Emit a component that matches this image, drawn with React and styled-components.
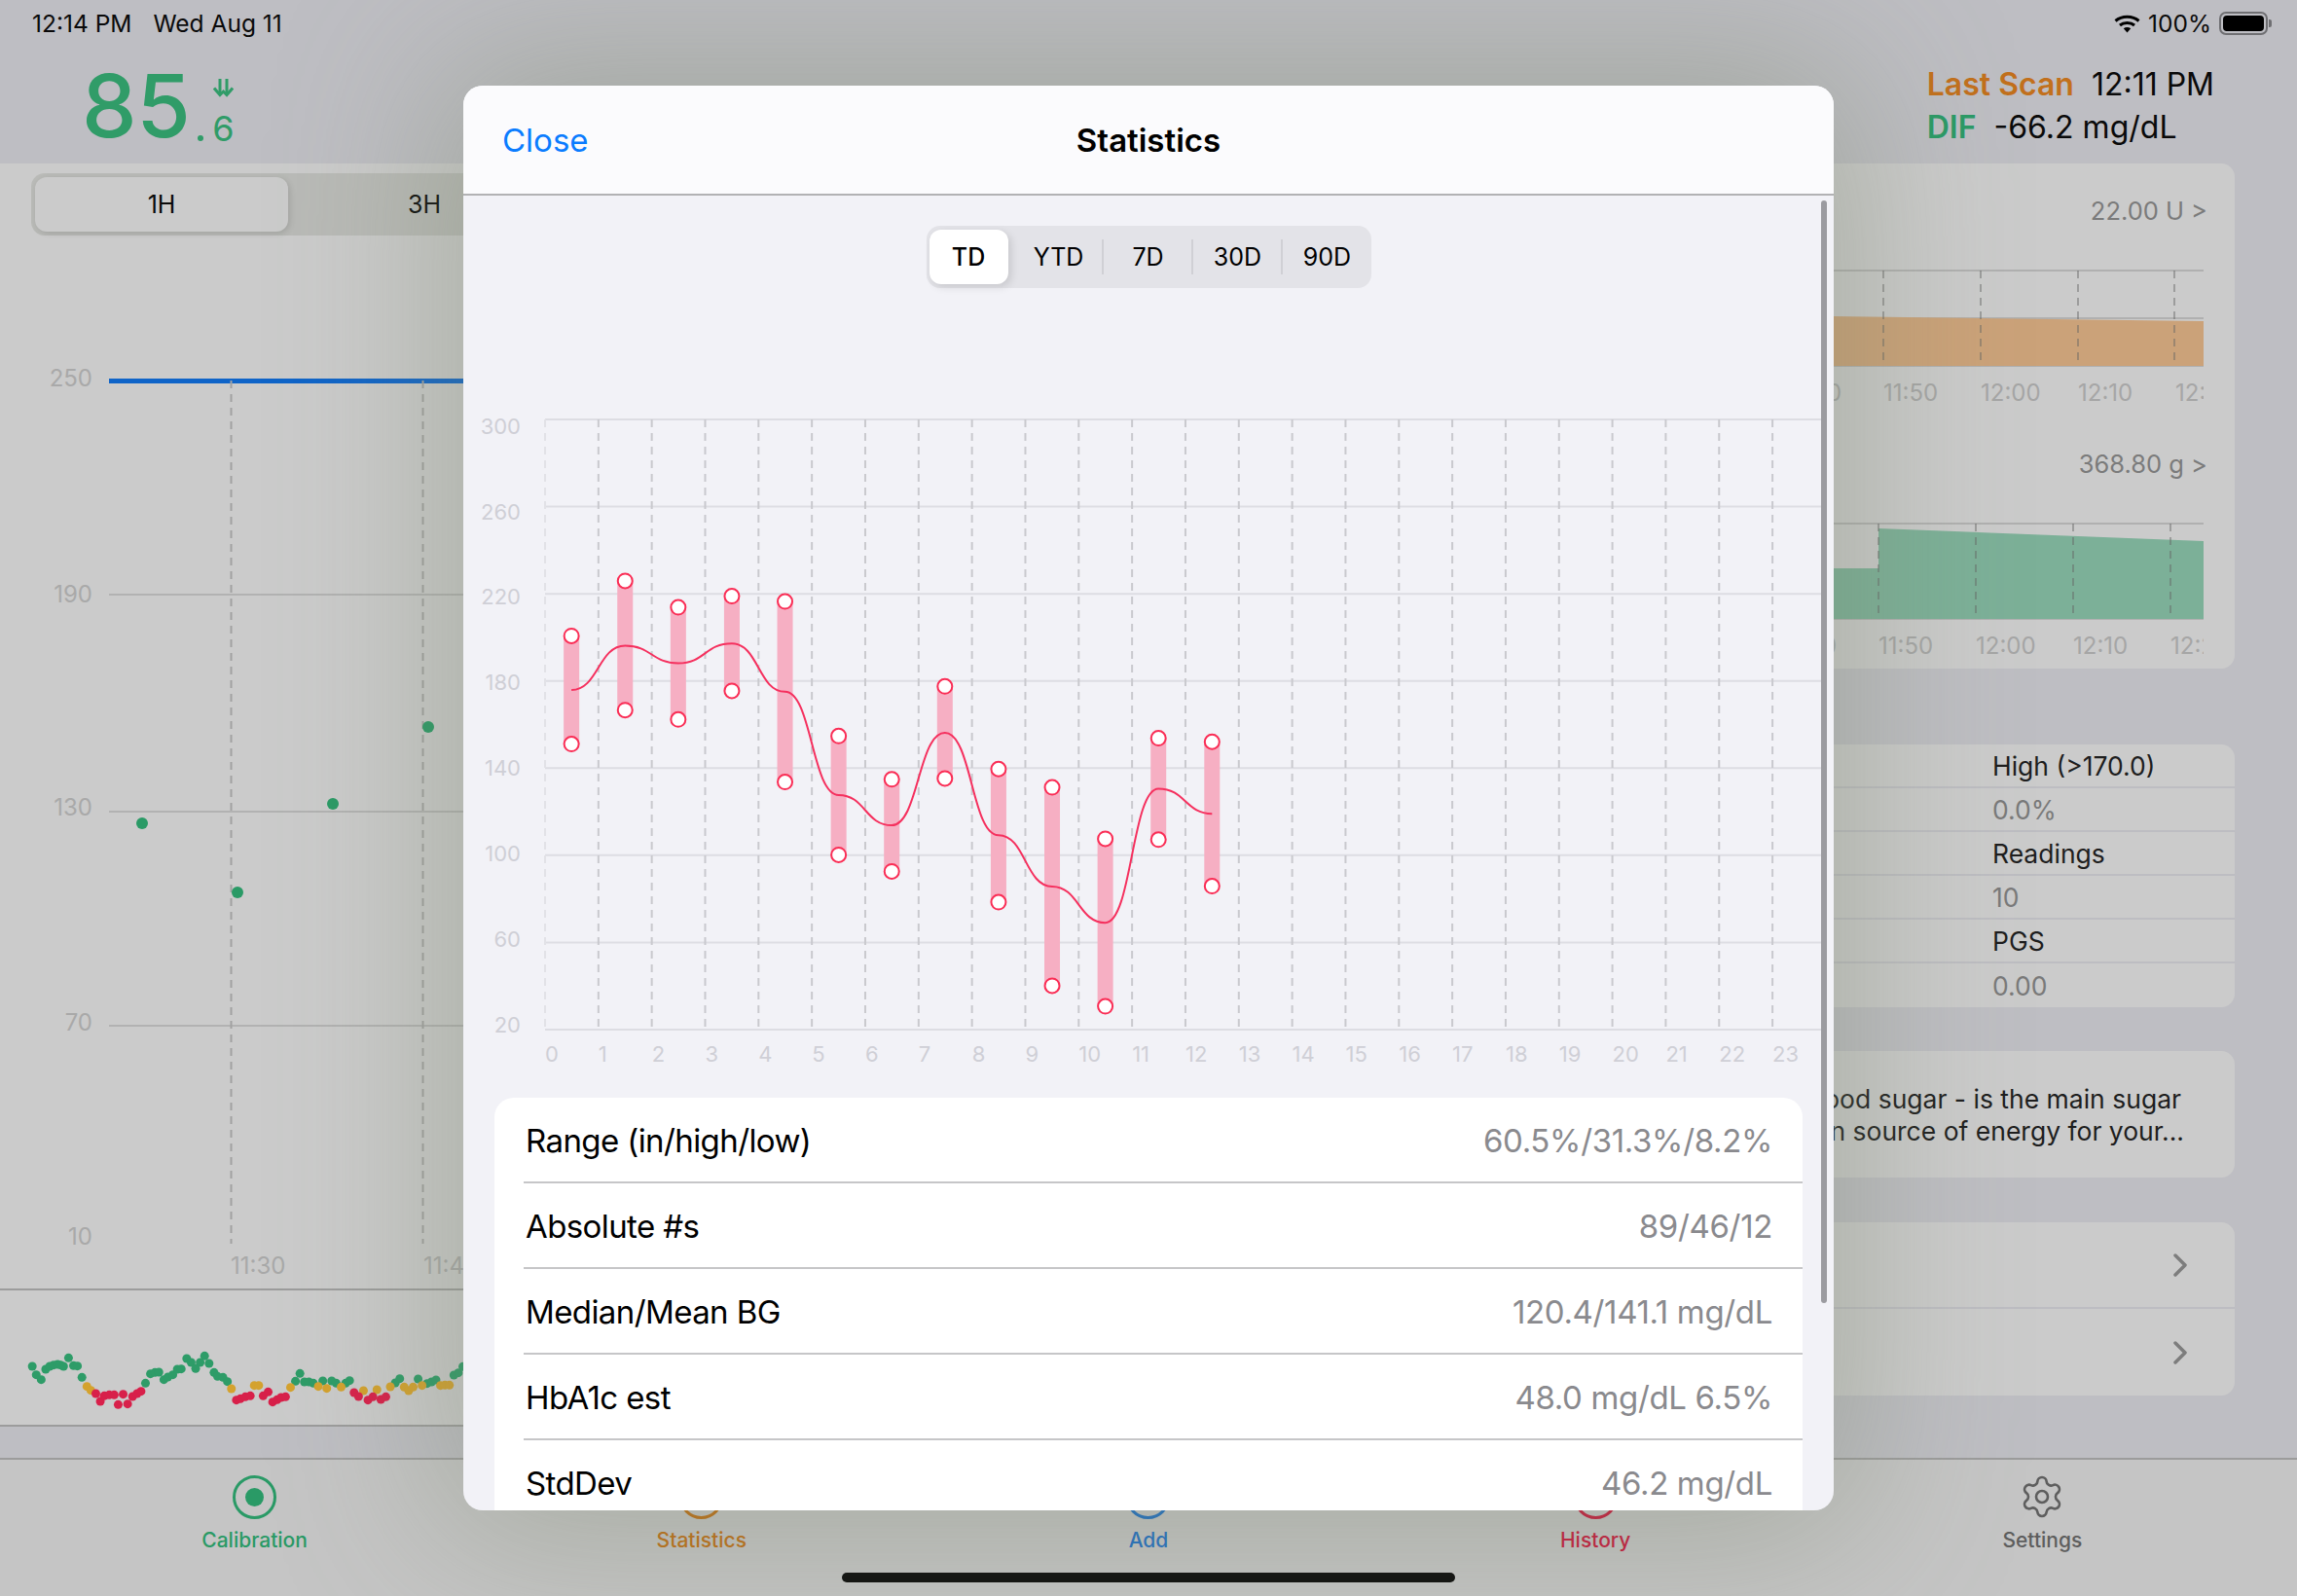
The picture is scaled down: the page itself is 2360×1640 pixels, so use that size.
import React from 'react'
import styled, { createGlobalStyle } from 'styled-components'
import { Settings } from 'lucide-react'

const GlobalStyle = createGlobalStyle`
  html, body { margin: 0; padding: 0; background: #bebec3; }
  * { box-sizing: border-box; }
`

const Page = styled.div`
  position: relative;
  width: 2360px;
  height: 1640px;
  overflow: hidden;
  display: flex;
  flex-direction: column;
  background: #bebec3;
  color: #0a0a0a;
  font-family: Inter, "Liberation Sans", sans-serif;
`
const StatusBar = styled.div`
  height: 48px;
  padding: 0 30px 0 33px;
  display: flex;
  align-items: center;
  font-size: 24.5px;
  gap: 22px;
`
const StatusRight = styled.div`
  margin-left: auto;
  display: flex;
  align-items: center;
  gap: 8px;
`
const Battery = styled.div`
  width: 50px;
  height: 24px;
  border: 2px solid #6f6f72;
  border-radius: 7px;
  padding: 2px;
  position: relative;
  &::before {
    content: '';
    display: block;
    height: 100%;
    background: #000;
    border-radius: 4px;
  }
  &::after {
    content: '';
    position: absolute;
    right: -6px;
    top: 6px;
    width: 3px;
    height: 8px;
    background: #6f6f72;
    border-radius: 0 2px 2px 0;
  }
`
const TopRow = styled.div`
  height: 120px;
  padding: 0 85px 0 84px;
  display: flex;
  justify-content: space-between;
`
const Reading = styled.div`
  display: flex;
  align-items: flex-end;
  height: 99px;
  color: #309c68;
`
const BigValue = styled.span`
  font-size: 90px;
  line-height: 76px;
  font-weight: 500;
  letter-spacing: -0.5px;
`
const Dot = styled.span`
  width: 6px;
  height: 6px;
  border-radius: 50%;
  background: #309c68;
  margin: 0 9px 2px 8px;
`
const Trend = styled.div`
  display: flex;
  flex-direction: column;
  align-items: center;
  gap: 17px;
`
const SmallValue = styled.span`
  font-size: 36px;
  line-height: 30px;
`
const ScanInfo = styled.div`
  display: flex;
  flex-direction: column;
  gap: 10px;
  padding-top: 22px;
  font-size: 32px;
  line-height: 34px;
`
const ScanRow = styled.div`
  display: flex;
  gap: 18px;
`
const ScanLabel = styled.span`
  font-weight: 600;
  color: ${(p) => p.$color};
`
const Body = styled.div`
  height: 1332px;
  display: flex;
  border-bottom: 2px solid #9c9c9c;
`
const LeftColumn = styled.div`
  width: 1180px;
  flex: none;
  display: flex;
  flex-direction: column;
`
const GraphPanel = styled.div`
  height: 1158px;
  background: #cbcbcb;
  padding-top: 10px;
  border-bottom: 2px solid #9c9c9c;
  display: flex;
  flex-direction: column;
`
const RangeTabs = styled.div`
  margin-left: 32px;
  height: 64px;
  flex: none;
  padding: 4px;
  display: flex;
  background: #b9bab7;
  border-radius: 14px 0 0 14px;
`
const RangeTab = styled.div`
  width: ${(p) => (p.$active ? 260 : 280)}px;
  display: flex;
  align-items: center;
  justify-content: center;
  font-size: 25px;
  border-radius: 12px;
  background: ${(p) => (p.$active ? '#cbcbcb' : 'transparent')};
  box-shadow: ${(p) => (p.$active ? '2px 2px 6px rgba(0,0,0,.12)' : 'none')};
`
const Strip = styled.div`
  height: 140px;
  background: #cbcbcb;
  border-bottom: 2px solid #9c9c9c;
`
const RightColumn = styled.div`
  flex: 1;
  padding-right: 64px;
  display: flex;
  flex-direction: column;
`
const Card = styled.div`
  margin-top: ${(p) => p.$top || 0}px;
  background: #cbcbcb;
  border-radius: 14px;
  overflow: hidden;
`
const ChartCard = styled(Card)`
  height: 519px;
  display: flex;
  flex-direction: column;
`
const ChartValue = styled.div`
  height: 34px;
  margin-top: ${(p) => p.$top}px;
  padding-right: 28px;
  text-align: right;
  font-size: 25.5px;
  line-height: 34px;
  color: #7b7b7b;
`
const ChartSvg = styled.svg`
  display: block;
  flex: none;
  margin-top: ${(p) => p.$top || 0}px;
`
const InfoRow = styled.div`
  height: 45px;
  padding-left: 867px;
  display: flex;
  align-items: center;
  font-size: 26.5px;
  color: ${(p) => (p.$muted ? '#7a7a7a' : '#1e1e1e')};
  border-bottom: ${(p) => (p.$last ? 'none' : '2px solid #bdbdc2')};
`
const NoteCard = styled(Card)`
  height: 130px;
  padding: 1px 55px 0 0;
  display: flex;
  flex-direction: column;
  justify-content: center;
  align-items: flex-end;
  gap: 2px;
  font-size: 26.5px;
  line-height: 31px;
  color: #1e1e1e;
`
const NoteLine = styled.span`
  margin-right: ${(p) => (p.$long ? -3 : 0)}px;
`
const LinkRow = styled.div`
  height: 89px;
  padding-right: 49px;
  display: flex;
  align-items: center;
  justify-content: flex-end;
  border-bottom: ${(p) => (p.$last ? 'none' : '2px solid #bdbdc2')};
`
const TabBar = styled.div`
  flex: 1;
  padding: 16px 32px 0;
  display: grid;
  grid-template-columns: repeat(5, 1fr);
  background: #c5c5c5;
`
const TabItem = styled.div`
  display: flex;
  flex-direction: column;
  align-items: center;
  gap: 10px;
  font-size: 21px;
  line-height: 24px;
  font-weight: 500;
  color: ${(p) => p.$color};
`
const RingIcon = styled.div`
  width: 45px;
  height: 45px;
  border-radius: 50%;
  border: 3px solid ${(p) => p.$color};
  display: flex;
  align-items: center;
  justify-content: center;
  &::after {
    content: '';
    display: ${(p) => (p.$filled ? 'block' : 'none')};
    width: 19px;
    height: 19px;
    border-radius: 50%;
    background: ${(p) => p.$color};
  }
`
const HomeBar = styled.div`
  position: absolute;
  left: 865px;
  bottom: 14px;
  width: 630px;
  height: 10px;
  border-radius: 5px;
  background: #0a0a0a;
`
const Modal = styled.div`
  position: absolute;
  left: 476px;
  top: 88px;
  width: 1408px;
  height: 1464px;
  border-radius: 20px;
  overflow: hidden;
  background: #f2f2f7;
  display: flex;
  flex-direction: column;
`
const ModalGlow = styled.div`
  position: absolute;
  left: 476px;
  top: 88px;
  width: 1408px;
  height: 1464px;
  border-radius: 20px;
  box-shadow: 0 0 170px 20px rgba(120, 130, 105, 0.42);
`
const ModalHeader = styled.div`
  height: 113px;
  flex: none;
  position: relative;
  display: flex;
  align-items: center;
  justify-content: center;
  background: #fbfbfd;
  border-bottom: 2px solid #b2b2b4;
  font-size: 33px;
  font-weight: 600;
  color: #000;
`
const CloseLink = styled.span`
  position: absolute;
  left: 40px;
  font-weight: 400;
  color: #0a7cff;
`
const Segments = styled.div`
  align-self: center;
  flex: none;
  margin-top: 31px;
  width: 457px;
  height: 64px;
  padding: 4px 3px;
  display: flex;
  background: #e3e3e8;
  border-radius: 14px;
`
const Segment = styled.div`
  flex: none;
  width: ${(p) => (p.$active ? 81 : 92)}px;
  margin-right: ${(p) => (p.$active ? 6 : 0)}px;
  display: flex;
  align-items: center;
  justify-content: center;
  font-size: 25px;
  font-weight: ${(p) => (p.$active ? 500 : 400)};
  color: #000;
  border-radius: 12px;
  background: ${(p) => (p.$active ? '#fff' : 'transparent')};
  box-shadow: ${(p) => (p.$active ? '3px 3px 8px rgba(0,0,0,.12)' : 'none')};
  position: relative;
  &::after {
    content: '';
    display: ${(p) => (p.$divider ? 'block' : 'none')};
    position: absolute;
    right: 0;
    top: 10px;
    bottom: 10px;
    width: 2px;
    background: #d0d0d5;
  }
`
const StatCard = styled.div`
  margin: 0 32px;
  background: #fff;
  border-radius: 20px 20px 0 0;
  flex: none;
`
const StatRow = styled.div`
  height: 88px;
  margin-left: 30px;
  padding: 2px 31px 0 2px;
  display: flex;
  align-items: center;
  justify-content: space-between;
  font-size: 33px;
  letter-spacing: -0.6px;
  color: #000;
  border-bottom: 2px solid #c6c6c8;
`
const StatValue = styled.span`
  color: #8a8a8e;
  letter-spacing: -0.35px;
`
const ScrollThumb = styled.div`
  position: absolute;
  right: 7px;
  top: 118px;
  width: 6px;
  height: 1133px;
  border-radius: 3px;
  background: #9b9ba0;
`

const CANDLES = [
  [210, 552, 794, 673], [318, 429, 718, 574], [425, 488, 739, 613], [533, 463, 675, 569],
  [640, 475, 879, 677], [748, 776, 1042, 908], [855, 873, 1079, 976], [962, 665, 871, 769],
  [1070, 850, 1148, 998], [1178, 891, 1335, 1113], [1285, 1006, 1381, 1194], [1392, 781, 1008, 894],
  [1500, 789, 1112, 950],
]
const px = (x) => 480 + x / 1.96
const py = (y) => 400 + y / 2.178

const trendPath = () => {
  let d = ''
  CANDLES.forEach((c, i) => {
    const x = px(c[0])
    const y = py(c[3])
    if (i === 0) {
      d = `M${x} ${y}`
    } else {
      const prev = CANDLES[i - 1]
      const x0 = px(prev[0])
      const y0 = py(prev[3])
      const mid = (x0 + x) / 2
      d += ` C${mid} ${y0} ${mid} ${y} ${x} ${y}`
    }
  })
  return d
}

const Y_LABELS = ['300', '260', '220', '180', '140', '100', '60', '20']

const StatsChart = () => (
  <ChartSvg width="1408" height="832" viewBox="476 296 1408 832" fontFamily="Inter, sans-serif" fontSize="22" fill="#cfcfd6">
    {Y_LABELS.map((l, i) => (
      <g key={l}>
        <line x1="560" x2="1877" y1={431 + i * 89.57} y2={431 + i * 89.57} stroke="#dddde3" strokeWidth="2" />
        <text x="535" y={445.6 + i * 87.9} textAnchor="end">{l}</text>
      </g>
    ))}
    {Array.from({ length: 25 }).map((_, i) => (
      <line key={i} x1={560 + i * 54.83} x2={560 + i * 54.83} y1="431" y2="1058" stroke={i === 0 ? '#e2e2e7' : '#c9c9ce'} strokeWidth="2" strokeDasharray="8 6" />
    ))}
    {Array.from({ length: 24 }).map((_, i) => (
      <text key={i} x={560 + i * 54.83} y="1091">{i}</text>
    ))}
    {CANDLES.map((c) => (
      <rect key={c[0]} x={px(c[0]) - 8} y={py(c[1])} width="16" height={py(c[2]) - py(c[1])} fill="#f6afc3" />
    ))}
    <path d={trendPath()} fill="none" stroke="#f5305e" strokeWidth="2" />
    {CANDLES.map((c) => (
      <g key={c[0]} fill="#fff" stroke="#fa2d55" strokeWidth="2">
        <circle cx={px(c[0])} cy={py(c[1])} r="7.5" />
        <circle cx={px(c[0])} cy={py(c[2])} r="7.5" />
      </g>
    ))}
  </ChartSvg>
)

const GRID_Y = [391, 611, 834, 1054]
const GLUCOSE_LABELS = [[250, 397], [190, 619], [130, 838], [70, 1059], [10, 1279]]

const MainGraph = () => (
  <ChartSvg width="1180" height="1082" viewBox="0 242 1180 1082" fontFamily="Inter, sans-serif" fontSize="24" fill="#a9a9a9">
    {GRID_Y.map((y) => (
      <line key={y} x1="112" x2="1180" y1={y} y2={y} stroke="#b2b2b2" strokeWidth="2" />
    ))}
    <rect x="112" y="389" width="1068" height="5" fill="#0f64c8" />
    {GLUCOSE_LABELS.map(([l, y]) => (
      <text key={l} x="95" y={y} textAnchor="end">{l}</text>
    ))}
    {[237.5, 434.5].map((x) => (
      <line key={x} x1={x} x2={x} y1="391" y2="1278" stroke="#a2a2a2" strokeWidth="2" strokeDasharray="8 6" />
    ))}
    <text x="237" y="1309">11:30</text>
    <text x="435" y="1309">11:40</text>
    {[[146, 846], [244, 917], [342, 826], [440, 747]].map(([x, y]) => (
      <circle key={x} cx={x} cy={y} r="6" fill="#2a9a66" />
    ))}
  </ChartSvg>
)

const G = '#2e9c68'
const Y = '#d4a22e'
const R = '#d8204a'
const STRIP_DOTS = [
  [G, [[65,372],[73,398],[83,413],[92,381],[100,372],[108,368],[116,366],[122,368],[128,372],[138,346],[148,370],[156,371],[165,406],[293,424],[303,395],[312,391],[320,390],[330,413],[338,405],[348,398],[357,381],[365,380],[376,348],[385,360],[394,379],[403,360],[412,340],[421,363],[431,391],[438,403],[449,406],[458,419],[595,418],[604,394],[613,420],[622,420],[631,424],[650,417],[668,417],[677,424],[696,424],[704,416],[796,423],[805,410],[842,411],[860,425],[869,420],[878,414],[914,399],[923,392],[932,373]]],
  [Y, [[175,434],[183,446],[466,441],[512,431],[521,431],[585,437],[641,434],[658,440],[687,436],[732,447],[759,444],[786,435],[814,436],[823,447],[832,436],[850,431],[887,431],[896,430],[905,430]]],
  [R, [[193,456],[202,480],[210,463],[220,460],[230,460],[238,490],[248,458],[257,488],[267,465],[276,456],[284,449],[476,476],[484,472],[494,466],[504,463],[530,463],[540,451],[549,482],[558,475],[566,468],[575,466],[713,453],[722,465],[741,476],[751,466],[767,474],[777,466]]],
]

const ScatterStrip = () => (
  <ChartSvg width="480" height="138" viewBox="0 1326 480 138">
    {STRIP_DOTS.map(([color, points]) =>
      points.map(([x, y]) => <circle key={`${x}-${y}`} cx={x / 1.96} cy={1280 + y / 3} r="4.5" fill={color} />)
    )}
  </ChartSvg>
)

const DoseChart = ({ top, viewY, gridX, area, fill, marginTop }) => (
  <ChartSvg width="1084" height="139" viewBox={`1180 ${viewY} 1084 139`} fontFamily="Inter, sans-serif" fontSize="24" fill="#a6a6a6" $top={marginTop}>
    <line x1="1180" x2="2264" y1={top} y2={top} stroke="#b0b0b0" strokeWidth="2" />
    <line x1="1180" x2="2264" y1={top + 49} y2={top + 49} stroke="#b0b0b0" strokeWidth="2" />
    <line x1="1180" x2="2264" y1={top + 98} y2={top + 98} stroke="#b0b0b0" strokeWidth="2" />
    <polygon points={area} fill={fill} />
    {gridX.map((x) => (
      <line key={x} x1={x} x2={x} y1={top} y2={top + 98} stroke="rgba(100,100,100,.45)" strokeWidth="2" strokeDasharray="8 6" />
    ))}
    {['11:40', '11:50', '12:00', '12:10', '12:20'].map((t, i) => (
      <text key={t} x={gridX[0] - 100 + i * 100} y={top + 134}>{t}</text>
    ))}
  </ChartSvg>
)

const WifiIcon = () => (
  <svg width="27" height="19" viewBox="0 0 27 19" fill="none" stroke="#000" strokeWidth="3">
    <path d="M1.5 6.5C8 .8 19 .8 25.500 6.500" />
    <path d="M6 11C10 7.600 17 7.600 21 11" />
    <path d="M13.500 18.500L9.800 14.300C12 12.600 15 12.600 17.200 14.300Z" fill="#000" stroke="none" />
  </svg>
)

const TrendArrows = () => (
  <svg width="21" height="19" viewBox="0 0 21 19" fill="none" stroke="#309c68" strokeWidth="3">
    <path d="M7 0V16M14 0V16" />
    <path d="M1 9.500L7 16.500L10.500 13L14 16.500L20 9.500" />
  </svg>
)

const Chevron = () => (
  <svg width="14" height="24" viewBox="0 0 14 24" fill="none" stroke="#7d7d7d" strokeWidth="3.500" strokeLinecap="round" strokeLinejoin="round">
    <path d="M2 2L12 12L2 22" />
  </svg>
)

const STATS = [
  ['Range (in/high/low)', '60.5%/31.3%/8.2%'],
  ['Absolute #s', '89/46/12'],
  ['Median/Mean BG', '120.4/141.1 mg/dL'],
  ['HbA1c est', '48.0 mg/dL 6.5%'],
  ['StdDev', '46.2 mg/dL'],
]
const INFO = [
  ['High (>170.0)', false], ['0.0%', true], ['Readings', false],
  ['10', true], ['PGS', false], ['0.00', true],
]

export default function App() {
  return (
    <Page>
      <GlobalStyle />
      <StatusBar>
        <span>12:14 PM</span>
        <span>Wed Aug 11</span>
        <StatusRight>
          <WifiIcon />
          <span>100%</span>
          <Battery />
        </StatusRight>
      </StatusBar>
      <TopRow>
        <Reading>
          <BigValue>85</BigValue>
          <Dot />
          <Trend>
            <TrendArrows />
            <SmallValue>6</SmallValue>
          </Trend>
        </Reading>
        <ScanInfo>
          <ScanRow>
            <ScanLabel $color="#c2701c">Last Scan</ScanLabel>
            <span>12:11 PM</span>
          </ScanRow>
          <ScanRow>
            <ScanLabel $color="#2a9a66">DIF</ScanLabel>
            <span>-66.2 mg/dL</span>
          </ScanRow>
        </ScanInfo>
      </TopRow>
      <Body>
        <LeftColumn>
          <GraphPanel>
            <RangeTabs>
              <RangeTab $active>1H</RangeTab>
              <RangeTab>3H</RangeTab>
              <RangeTab>6H</RangeTab>
            </RangeTabs>
            <MainGraph />
          </GraphPanel>
          <Strip>
            <ScatterStrip />
          </Strip>
        </LeftColumn>
        <RightColumn>
          <ChartCard>
            <ChartValue $top={32}>22.00 U &gt;</ChartValue>
            <DoseChart
              marginTop={42}
              viewY={276}
              top={278}
              gridX={[1935, 2035, 2135, 2234]}
              area="1180,325 1884,325 2264,330 2264,376 1180,376"
              fill="#cba279"
            />
            <ChartValue $top={45}>368.80 g &gt;</ChartValue>
            <DoseChart
              marginTop={42}
              viewY={536}
              top={538}
              gridX={[1930, 2030, 2130, 2230]}
              area="1180,584 1930,584 1930,543 2264,556 2264,636 1180,636"
              fill="#7cb098"
            />
          </ChartCard>
          <Card $top={78}>
            {INFO.map(([text, muted], i) => (
              <InfoRow key={text} $muted={muted} $last={i === INFO.length - 1}>{text}</InfoRow>
            ))}
          </Card>
          <NoteCard $top={45}>
            <NoteLine>blood sugar - is the main sugar</NoteLine>
            <NoteLine $long>main source of energy for your...</NoteLine>
          </NoteCard>
          <Card $top={46}>
            <LinkRow><Chevron /></LinkRow>
            <LinkRow $last><Chevron /></LinkRow>
          </Card>
        </RightColumn>
      </Body>
      <TabBar>
        <TabItem $color="#2a9a66">
          <RingIcon $color="#2a9a66" $filled />
          Calibration
        </TabItem>
        <TabItem $color="#bf6f14">
          <RingIcon $color="#bf6f14" />
          Statistics
        </TabItem>
        <TabItem $color="#1f6fc4">
          <RingIcon $color="#1f6fc4" />
          Add
        </TabItem>
        <TabItem $color="#c8183c">
          <RingIcon $color="#c8183c" />
          History
        </TabItem>
        <TabItem $color="#5e5e5e">
          <Settings size={48} strokeWidth={1.3} color="#5e5e5e" style={{ margin: '-2px 0 -1px' }} />
          Settings
        </TabItem>
      </TabBar>
      <HomeBar />
      <ModalGlow />
      <Modal>
        <ModalHeader>
          <CloseLink>Close</CloseLink>
          Statistics
        </ModalHeader>
        <Segments>
          <Segment $active>TD</Segment>
          <Segment $divider>YTD</Segment>
          <Segment $divider>7D</Segment>
          <Segment $divider>30D</Segment>
          <Segment>90D</Segment>
        </Segments>
        <StatsChart />
        <StatCard>
          {STATS.map(([label, value]) => (
            <StatRow key={label}>
              <span>{label}</span>
              <StatValue>{value}</StatValue>
            </StatRow>
          ))}
        </StatCard>
        <ScrollThumb />
      </Modal>
    </Page>
  )
}
